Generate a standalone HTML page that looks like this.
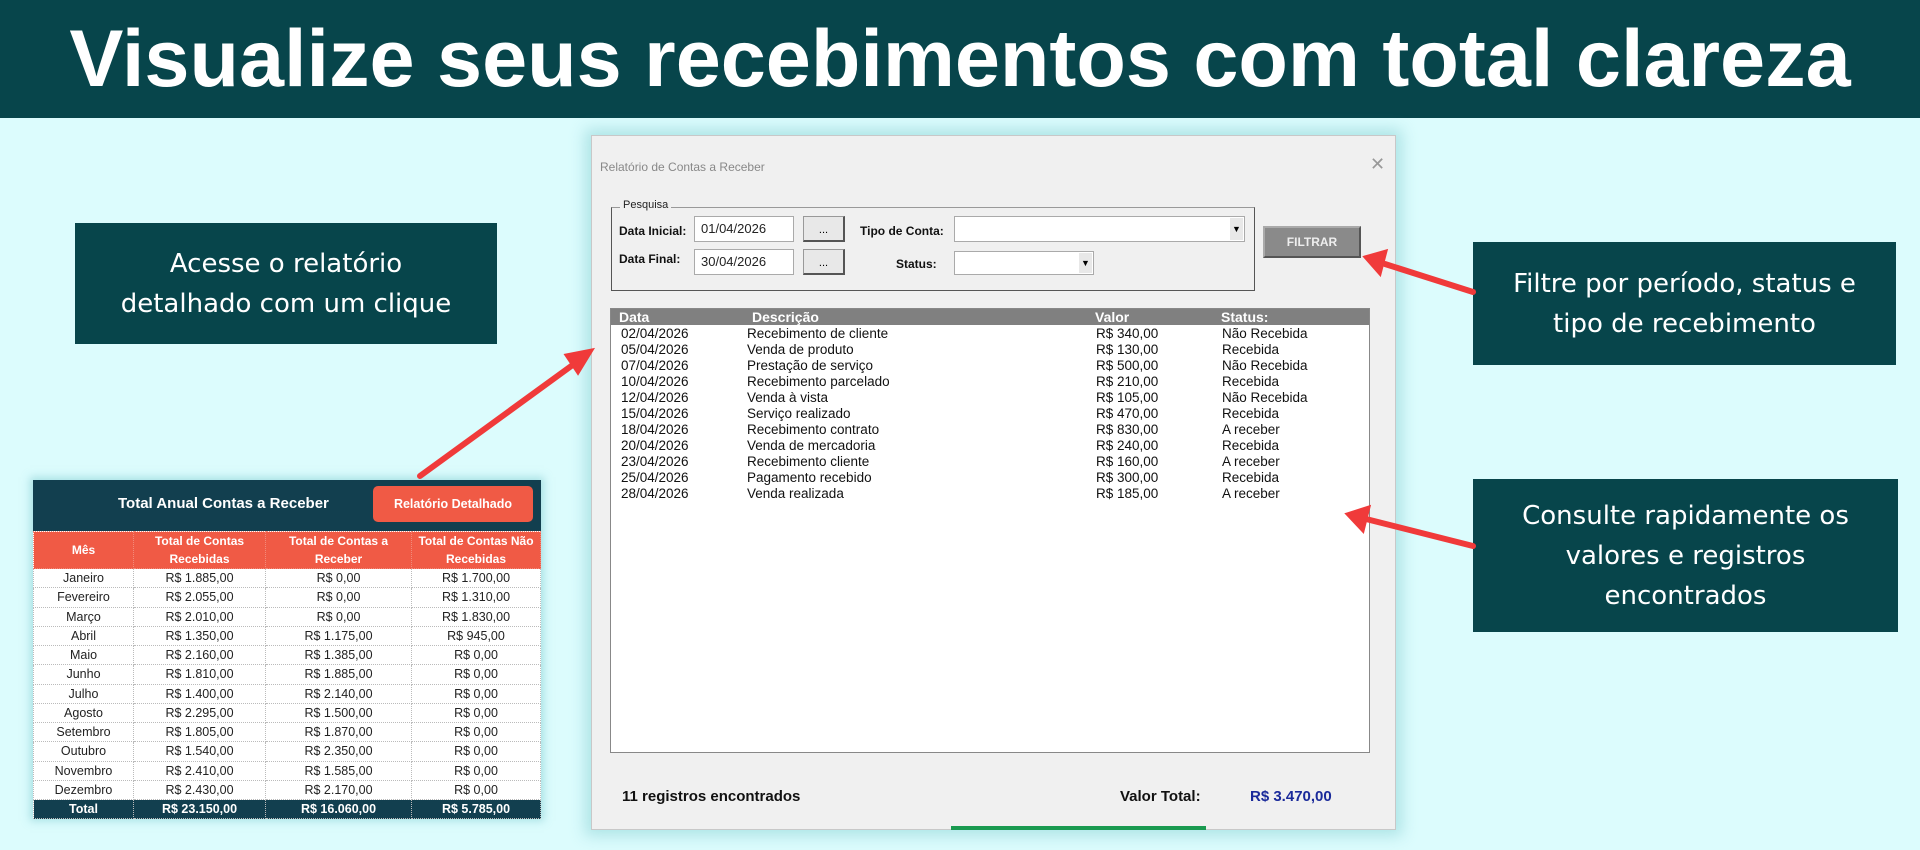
<!DOCTYPE html>
<html><head><meta charset="utf-8"><style>
*{margin:0;padding:0;box-sizing:border-box}
body{width:1920px;height:850px;background:#dcfcfd;position:relative;overflow:hidden;font-family:"Liberation Sans","DejaVu Sans",sans-serif}
.abs{position:absolute}
#hdr{left:0;top:0;width:1920px;height:118px;background:#07454b;color:#fff;font-weight:bold;font-size:81px;text-align:center;line-height:118px;white-space:nowrap;font-family:"Liberation Sans",sans-serif}
.note{background:#07454b;color:#fff;font-size:26px;text-align:center;display:flex;align-items:center;justify-content:center;line-height:40px;font-family:"DejaVu Sans",sans-serif}
#dlg{left:591px;top:135px;width:805px;height:695px;background:#f0f0f0;border:1px solid #c8c8c8;box-shadow:0 0 14px 6px rgba(120,200,205,.45);font-family:"Liberation Sans Narrow","Liberation Sans",sans-serif}
.lbl{font-size:12px;font-weight:bold;color:#111;white-space:nowrap}
.inp{background:#fff;border:1px solid #aaa;font-size:13px;padding:4px 6px;color:#222}
.btn{background:#e8e8e8;border:1px solid #999;border-bottom:2px solid #555;border-right:2px solid #555;font-size:11px;text-align:center}
.row{position:absolute;left:0;width:760px;height:16px;font-size:13.5px;line-height:16px;color:#111}
.row span{position:absolute}
table{border-collapse:collapse}
#xt td{border:1px dotted #bbb;text-align:center;font-size:12.5px;height:19.25px;color:#222;padding:0}
</style></head><body>
<div id="hdr" class="abs">Visualize seus recebimentos com total clareza</div>

<div class="abs note" style="left:75px;top:223px;width:422px;height:121px">Acesse o relatório<br>detalhado com um clique</div>
<div class="abs note" style="left:1473px;top:242px;width:423px;height:123px">Filtre por período, status e<br>tipo de recebimento</div>
<div class="abs note" style="left:1473px;top:479px;width:425px;height:153px">Consulte rapidamente os<br>valores e registros<br>encontrados</div>

<div id="dlg" class="abs">
 <div class="abs" style="left:8px;top:24px;font-size:12px;color:#888">Relatório de Contas a Receber</div>
 <div class="abs" style="left:778px;top:18px;font-size:18px;color:#999">✕</div>
 <div class="abs" style="left:19px;top:71px;width:644px;height:84px;border:1px solid #555;border-top-color:#999"></div>
 <div class="abs" style="left:28px;top:63px;font-size:11px;background:#f0f0f0;padding:0 3px;color:#222">Pesquisa</div>
 <div class="abs lbl" style="left:27px;top:88px">Data Inicial:</div>
 <div class="abs inp" style="left:102px;top:80px;width:100px;height:26px">01/04/2026</div>
 <div class="abs btn" style="left:211px;top:80px;width:42px;height:26px;line-height:26px">...</div>
 <div class="abs lbl" style="left:27px;top:116px">Data Final:</div>
 <div class="abs inp" style="left:102px;top:113px;width:100px;height:26px">30/04/2026</div>
 <div class="abs btn" style="left:211px;top:113px;width:42px;height:26px;line-height:26px">...</div>
 <div class="abs lbl" style="left:268px;top:88px">Tipo de Conta:</div>
 <div class="abs inp" style="left:362px;top:80px;width:291px;height:26px"></div>
 <div class="abs" style="left:638px;top:82px;width:13px;height:22px;background:#e8e8e8;font-size:9px;text-align:center;line-height:22px">▼</div>
 <div class="abs lbl" style="left:304px;top:121px">Status:</div>
 <div class="abs inp" style="left:362px;top:115px;width:140px;height:24px"></div>
 <div class="abs" style="left:487px;top:117px;width:13px;height:20px;background:#e8e8e8;font-size:9px;text-align:center;line-height:20px">▼</div>
 <div class="abs" style="left:671px;top:90px;width:98px;height:32px;background:#8a8a8a;border:2px solid #555;border-top-color:#aaa;border-left-color:#aaa;color:#eee;font-weight:bold;font-size:12px;text-align:center;line-height:28px">FILTRAR</div>

 <div class="abs" style="left:18px;top:172px;width:760px;height:445px;background:#fff;border:1px solid #888">
  <div class="abs" style="left:0;top:0;width:758px;height:16px;background:#808080;color:#fff;font-size:14px;line-height:16px;font-weight:bold">
   <span class="abs" style="left:8px">Data</span><span class="abs" style="left:141px">Descrição</span><span class="abs" style="left:484px">Valor</span><span class="abs" style="left:610px">Status:</span></div>
  <div class="row" style="top:17px"><span style="left:10px">02/04/2026</span><span style="left:136px">Recebimento de cliente</span><span style="left:485px">R$ 340,00</span><span style="left:611px">Não Recebida</span></div>
  <div class="row" style="top:33px"><span style="left:10px">05/04/2026</span><span style="left:136px">Venda de produto</span><span style="left:485px">R$ 130,00</span><span style="left:611px">Recebida</span></div>
  <div class="row" style="top:49px"><span style="left:10px">07/04/2026</span><span style="left:136px">Prestação de serviço</span><span style="left:485px">R$ 500,00</span><span style="left:611px">Não Recebida</span></div>
  <div class="row" style="top:65px"><span style="left:10px">10/04/2026</span><span style="left:136px">Recebimento parcelado</span><span style="left:485px">R$ 210,00</span><span style="left:611px">Recebida</span></div>
  <div class="row" style="top:81px"><span style="left:10px">12/04/2026</span><span style="left:136px">Venda à vista</span><span style="left:485px">R$ 105,00</span><span style="left:611px">Não Recebida</span></div>
  <div class="row" style="top:97px"><span style="left:10px">15/04/2026</span><span style="left:136px">Serviço realizado</span><span style="left:485px">R$ 470,00</span><span style="left:611px">Recebida</span></div>
  <div class="row" style="top:113px"><span style="left:10px">18/04/2026</span><span style="left:136px">Recebimento contrato</span><span style="left:485px">R$ 830,00</span><span style="left:611px">A receber</span></div>
  <div class="row" style="top:129px"><span style="left:10px">20/04/2026</span><span style="left:136px">Venda de mercadoria</span><span style="left:485px">R$ 240,00</span><span style="left:611px">Recebida</span></div>
  <div class="row" style="top:145px"><span style="left:10px">23/04/2026</span><span style="left:136px">Recebimento cliente</span><span style="left:485px">R$ 160,00</span><span style="left:611px">A receber</span></div>
  <div class="row" style="top:161px"><span style="left:10px">25/04/2026</span><span style="left:136px">Pagamento recebido</span><span style="left:485px">R$ 300,00</span><span style="left:611px">Recebida</span></div>
  <div class="row" style="top:177px"><span style="left:10px">28/04/2026</span><span style="left:136px">Venda realizada</span><span style="left:485px">R$ 185,00</span><span style="left:611px">A receber</span></div>
 </div>
 <div class="abs" style="left:30px;top:652px;font-size:15px;font-weight:bold;color:#111">11 registros encontrados</div>
 <div class="abs" style="left:528px;top:652px;font-size:15px;font-weight:bold;color:#111">Valor Total:</div>
 <div class="abs" style="left:658px;top:652px;font-size:15px;font-weight:bold;color:#1a2a9a">R$ 3.470,00</div>
 <div class="abs" style="left:359px;top:690px;width:255px;height:4px;background:#1a9a50"></div>
</div>

<div class="abs" style="left:33px;top:480px;width:508px;height:338px;box-shadow:0 0 8px 3px rgba(120,200,205,.5);background:#fff">
 <div style="height:51px;background:#123f4f;position:relative">
  <div class="abs" style="left:85px;top:15px;color:#fff;font-weight:bold;font-size:15px">Total Anual Contas a Receber</div>
  <div class="abs" style="left:340px;top:6px;width:160px;height:36px;background:#f05a45;border-radius:5px;color:#fff;font-weight:bold;font-size:12.5px;text-align:center;line-height:36px">Relatório Detalhado</div>
 </div>
 <table id="xt" style="width:508px">
  <tr style="background:#f05a45"><td style="width:100px;height:36px;color:#fff;font-weight:bold;font-size:12px;border-color:#f28a7a">Mês</td><td style="width:132px;color:#fff;font-weight:bold;font-size:12px;line-height:18px;border-color:#f28a7a">Total de Contas<br>Recebidas</td><td style="width:146px;color:#fff;font-weight:bold;font-size:12px;line-height:18px;border-color:#f28a7a">Total de Contas a<br>Receber</td><td style="color:#fff;font-weight:bold;font-size:12px;line-height:18px;border-color:#f28a7a">Total de Contas Não<br>Recebidas</td></tr>
  <tr><td>Janeiro</td><td>R$ 1.885,00</td><td>R$ 0,00</td><td>R$ 1.700,00</td></tr>
  <tr><td>Fevereiro</td><td>R$ 2.055,00</td><td>R$ 0,00</td><td>R$ 1.310,00</td></tr>
  <tr><td>Março</td><td>R$ 2.010,00</td><td>R$ 0,00</td><td>R$ 1.830,00</td></tr>
  <tr><td>Abril</td><td>R$ 1.350,00</td><td>R$ 1.175,00</td><td>R$ 945,00</td></tr>
  <tr><td>Maio</td><td>R$ 2.160,00</td><td>R$ 1.385,00</td><td>R$ 0,00</td></tr>
  <tr><td>Junho</td><td>R$ 1.810,00</td><td>R$ 1.885,00</td><td>R$ 0,00</td></tr>
  <tr><td>Julho</td><td>R$ 1.400,00</td><td>R$ 2.140,00</td><td>R$ 0,00</td></tr>
  <tr><td>Agosto</td><td>R$ 2.295,00</td><td>R$ 1.500,00</td><td>R$ 0,00</td></tr>
  <tr><td>Setembro</td><td>R$ 1.805,00</td><td>R$ 1.870,00</td><td>R$ 0,00</td></tr>
  <tr><td>Outubro</td><td>R$ 1.540,00</td><td>R$ 2.350,00</td><td>R$ 0,00</td></tr>
  <tr><td>Novembro</td><td>R$ 2.410,00</td><td>R$ 1.585,00</td><td>R$ 0,00</td></tr>
  <tr><td>Dezembro</td><td>R$ 2.430,00</td><td>R$ 2.170,00</td><td>R$ 0,00</td></tr>
  <tr style="background:#123f4f"><td style="color:#fff;font-weight:bold">Total</td><td style="color:#fff;font-weight:bold">R$ 23.150,00</td><td style="color:#fff;font-weight:bold">R$ 16.060,00</td><td style="color:#fff;font-weight:bold">R$ 5.785,00</td></tr>
 </table>
</div>

<svg class="abs" style="left:0;top:0" width="1920" height="850">
 <g stroke="#f03a3a" stroke-width="6" fill="#f03a3a" stroke-linecap="round">
  <line x1="420" y1="476" x2="574" y2="364"/>
  <polygon points="592,350 566,355 578,373" stroke-width="3"/>
  <line x1="1473" y1="292" x2="1385" y2="264"/>
  <polygon points="1365,257 1386,251 1380,274" stroke-width="3"/>
  <line x1="1473" y1="546" x2="1366" y2="519"/>
  <polygon points="1347,514 1369,507 1363,531" stroke-width="3"/>
 </g>
</svg>
</body></html>
